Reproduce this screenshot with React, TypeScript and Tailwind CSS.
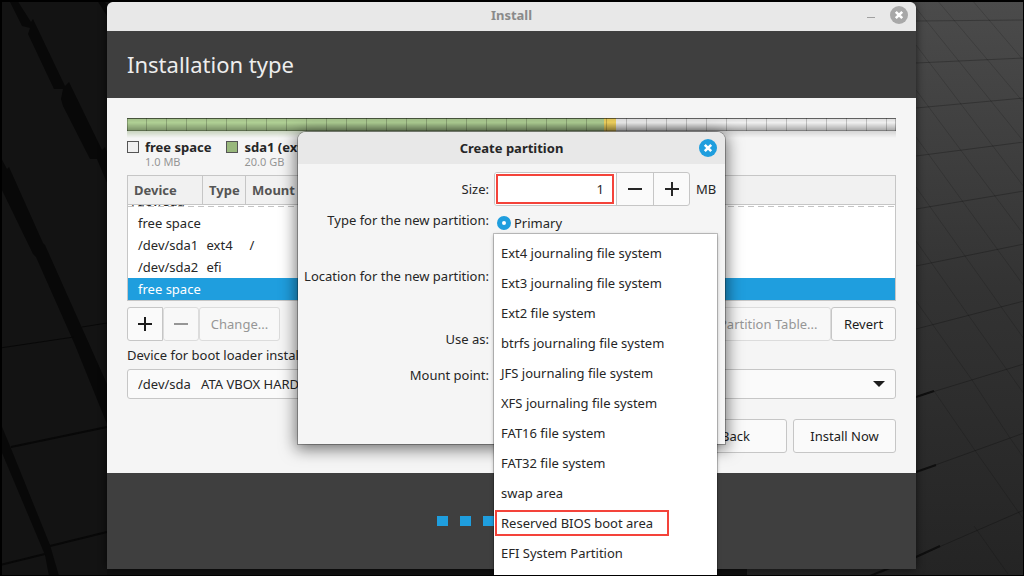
import { useState } from "react";
import type { ReactNode } from "react";

const fileSystems = [
  "Ext4 journaling file system",
  "Ext3 journaling file system",
  "Ext2 file system",
  "btrfs journaling file system",
  "JFS journaling file system",
  "XFS journaling file system",
  "FAT16 file system",
  "FAT32 file system",
  "swap area",
  "Reserved BIOS boot area",
  "EFI System Partition",
];

const partitions = [
  { device: "free space", type: "", mount: "" },
  { device: "/dev/sda1", type: "ext4", mount: "/" },
  { device: "/dev/sda2", type: "efi", mount: "" },
  { device: "free space", type: "", mount: "", selected: true },
];

function Wallpaper() {
  return (
    <svg
      className="absolute inset-0 h-full w-full"
      viewBox="0 0 1024 576"
      preserveAspectRatio="none"
      aria-hidden="true"
    >
      <defs>
        <linearGradient id="slate" x1="0" y1="0" x2="0" y2="1">
          <stop offset="0" stopColor="#4b4b4b" />
          <stop offset="0.5" stopColor="#333333" />
          <stop offset="1" stopColor="#242424" />
        </linearGradient>
      </defs>
      <rect width="512" height="576" fill="#131313" />
      <rect x="512" width="512" height="576" fill="url(#slate)" />
      <rect x="107" y="565" width="640" height="11" fill="#101010" />
      <g fill="#080808">
        <path d="M9 0H17L31 22 33 19 65 86 69 82 102 150 105 147 110 158V190L97 159H90L63 106 61 99 63 89H54L28 34 30 28 22 26Z" />
        <path d="M97 0H104L107 5V16Z" />
        <path d="M0 156 7 169 9 167 43 243 45 245 107 384V424L75 345 36 257 33 254 0 186Z" />
        <path d="M0 422 10 446 50 545 59 576H49L45 555 0 448Z" />
      </g>
      <g fill="none" stroke="#080808">
        <path d="M0 348 74 337M82 327 107 323" />
        <path strokeWidth="2" d="M11 447 107 427M50 546 107 532M0 565 45 554" />
      </g>
      <g fill="none" stroke="#000" strokeOpacity="0.15">
        <path
          strokeOpacity="0.24"
          d="M916 21 1024 20M916 63 1024 58M916 108 1024 98M916 156 1024 142M916 209 1024 191M916 266 1024 244M916 329 1024 301M916 397 1024 364M916 472 1024 433M880 573 916 557 1024 510"
        />
        <path d="M972 0 1024 61M937 0 1024 103M916 8 1024 142M916 45 1024 187M916 90 1024 235M916 137 1024 286M916 187 1024 339M916 241 1024 394M916 301 972 380 1010 438 1024 458M934 391 974 449 1024 520M974 526 1008 574" />
      </g>
      <g fill="none" stroke="#0f0f0f" strokeWidth="2">
        <path d="M916 397 934 391M916 472 936 465M870 576 916 557 940 546" />
      </g>
    </svg>
  );
}

function CloseIcon({ className }: { className: string }) {
  return (
    <svg className={className} width="18" height="18" viewBox="0 0 18 18" aria-hidden="true">
      <circle cx="9" cy="9" r="9" fill="currentColor" />
      <path d="M5.8 5.8 12.2 12.2M12.2 5.8 5.8 12.2" stroke="#fff" strokeWidth="2.6" />
    </svg>
  );
}

function Plus() {
  return (
    <svg width="14" height="14" viewBox="0 0 14 14" aria-hidden="true">
      <path d="M0 7H14M7 0V14" stroke="currentColor" strokeWidth="2" />
    </svg>
  );
}

function Minus() {
  return (
    <svg width="14" height="14" viewBox="0 0 14 14" aria-hidden="true">
      <path d="M0 7H14" stroke="currentColor" strokeWidth="2" />
    </svg>
  );
}

function Button({
  children,
  className = "",
  disabled,
  label,
}: {
  children: ReactNode;
  className?: string;
  disabled?: boolean;
  label?: string;
}) {
  return (
    <button
      type="button"
      disabled={disabled}
      aria-label={label}
      className={`flex h-[34px] items-center justify-center whitespace-nowrap rounded-[3px] border border-[#c6c6c6] bg-[#fafafa] text-[#1c1c1c] disabled:border-[#dcdcdc] disabled:bg-[#f8f8f8] disabled:text-[#969696] ${className}`}
    >
      {children}
    </button>
  );
}

function DiskBar() {
  return (
    <div>
      <div className="relative flex h-[13px] bg-[#f0f0f0]">
        <div className="w-[62%] bg-[#b0d095]" />
        <div className="w-3 bg-[#f5d660]" />
        <div className="absolute inset-0 bg-[repeating-linear-gradient(90deg,transparent_0px,transparent_20px,rgba(0,0,0,0.22)_20px,rgba(0,0,0,0.22)_21px)] bg-[length:20px_100%]" />
        <div className="absolute inset-0 bg-[repeating-linear-gradient(90deg,transparent_0px,transparent_19px,rgba(0,0,0,0.2)_19px,rgba(0,0,0,0.2)_20px)]" />
        <div className="absolute inset-0 border-x border-t border-black/25 bg-[linear-gradient(180deg,rgba(0,0,0,0.08)_0%,rgba(0,0,0,0)_30%,rgba(0,0,0,0.28)_90%,rgba(0,0,0,0.6)_100%)]" />
      </div>
      <div className="flex h-[7px] opacity-40 [mask-image:linear-gradient(180deg,black,transparent)]">
        <div className="w-[62%] bg-[#83a06c]" />
        <div className="w-3 bg-[#c0a23f]" />
        <div className="grow bg-[#a5a5a5]" />
      </div>
    </div>
  );
}

function LegendItem({ name, size, swatch }: { name: string; size: string; swatch: string }) {
  return (
    <li className="flex gap-1.5">
      <span className={`mt-[3px] h-3 w-3 border border-[#555] ${swatch}`} />
      <span className="flex flex-col whitespace-nowrap">
        <span className="font-bold leading-[18px]">{name}</span>
        <span className="text-[11px] leading-3 text-[#959595]">{size}</span>
      </span>
    </li>
  );
}

function PartitionTable() {
  return (
    <table className="mt-[7px] w-full table-fixed border-collapse border border-[#c6c6c6] bg-white">
      <thead>
        <tr className="h-[29px] bg-[#f1f1f1] text-left text-[#555]">
          <th className="w-[75px] border border-[#c6c6c6] pl-1.5 font-bold">Device</th>
          <th className="w-[43px] border border-[#c6c6c6] pl-1.5 font-bold">Type</th>
          <th className="whitespace-nowrap border border-[#c6c6c6] pl-1.5 font-bold">Mount point</th>
        </tr>
      </thead>
      <tbody>
        <tr>
          <td colSpan={3} className="p-0">
            <div className="relative flex h-[7px] items-end overflow-hidden pl-1">
              <span className="h-[22px] leading-[22px]">/dev/sda</span>
              <span className="absolute inset-x-0 top-px h-px bg-[repeating-linear-gradient(90deg,#c4c4c4_0px,#c4c4c4_6px,transparent_6px,transparent_10px)]" />
            </div>
          </td>
        </tr>
        {partitions.map((row, i) => (
          <tr
            key={i}
            className={row.selected ? "h-[22px] bg-[#1f9ede] text-white" : "h-[22px]"}
          >
            <td className="whitespace-nowrap p-0 pl-2.5">{row.device}</td>
            <td className="p-0 pl-1">{row.type}</td>
            <td className="p-0 pl-1">{row.mount}</td>
          </tr>
        ))}
      </tbody>
    </table>
  );
}

function CreatePartition() {
  const [size, setSize] = useState(1);
  const [kind, setKind] = useState("primary");
  const label = "whitespace-nowrap text-right";
  return (
    <section
      role="dialog"
      aria-labelledby="create-title"
      className="absolute inset-x-0 top-[130px] mx-auto min-h-[312px] w-[427px] rounded-t-lg bg-[#f5f5f5] shadow-[0_0_0_1px_rgba(0,0,0,0.28),0_3px_16px_2px_rgba(0,0,0,0.55)]"
    >
      <header className="grid h-8 grid-cols-[1fr_auto_1fr] items-center rounded-t-lg bg-[#e8e8e8] px-2">
        <h2 id="create-title" className="col-start-2 font-bold">
          Create partition
        </h2>
        <button type="button" aria-label="Close dialog" className="justify-self-end">
          <CloseIcon className="text-[#1f9ede]" />
        </button>
      </header>
      <form className="relative grid grid-cols-[191px_1fr] grid-rows-[34px_56px_56px_42px_30px] gap-x-[5px] pt-2">
        <label htmlFor="size" className={`${label} leading-[34px]`}>
          Size:
        </label>
        <div className="flex items-center gap-1.5">
          <div className="flex h-[34px] w-[196px] overflow-hidden rounded-[3px] border border-[#c6c6c6] bg-[#fafafa]">
            <div className="flex grow bg-white p-px">
              <input
                id="size"
                type="text"
                inputMode="numeric"
                value={size}
                onChange={(e) => setSize(Number(e.target.value) || 0)}
                className="w-[118px] border-2 border-[#f4433a] bg-white pr-2 text-right outline-none"
              />
            </div>
            <button
              type="button"
              aria-label="Decrease size"
              onClick={() => setSize(Math.max(0, size - 1))}
              className="flex w-[37px] items-center justify-center border-l border-[#c6c6c6]"
            >
              <Minus />
            </button>
            <button
              type="button"
              aria-label="Increase size"
              onClick={() => setSize(size + 1)}
              className="flex w-[36px] items-center justify-center border-l border-[#c6c6c6]"
            >
              <Plus />
            </button>
          </div>
          <span>MB</span>
        </div>

        <span className={`${label} leading-7`}>Type for the new partition:</span>
        <label className="flex h-[34px] items-center gap-[3px] pl-[3px]">
          <input
            type="radio"
            name="kind"
            checked={kind === "primary"}
            onChange={() => setKind("primary")}
            className="h-3.5 w-3.5 appearance-none rounded-full border-[5px] border-[#1f9ede] bg-white"
          />
          Primary
        </label>

        <span className={`${label} col-start-1 leading-7`}>Location for the new partition:</span>
        <span id="use-as" className={`${label} col-start-1 leading-[42px]`}>
          Use as:
        </span>
        <span className={`${label} col-start-1 leading-[30px]`}>Mount point:</span>

        <ul
          role="listbox"
          aria-labelledby="use-as"
          className="absolute left-[196px] top-[70px] w-[223px] bg-white pb-8 pl-px pt-1 shadow-[0_0_0_1px_rgba(0,0,0,0.2),0_1px_4px_rgba(0,0,0,0.3)]"
        >
          {fileSystems.map((name) => {
            const marked = name === "Reserved BIOS boot area";
            return (
              <li
                key={name}
                role="option"
                aria-selected={marked}
                className="flex h-[30px] items-center"
              >
                <span
                  className={`flex h-[26px] items-center whitespace-nowrap border-2 pl-1 pr-3.5 ${
                    marked ? "border-[#f4433a]" : "border-transparent"
                  }`}
                >
                  {name}
                </span>
              </li>
            );
          })}
        </ul>
      </form>
    </section>
  );
}

export default function App() {
  return (
    <div className="relative h-screen overflow-hidden bg-[#141414] font-['Noto_Sans','Open_Sans',sans-serif] text-[13px] leading-[18px] text-[#262626]">
      <Wallpaper />
      <main className="relative ml-[107px] mr-[108px] pt-0.5">
        <div className="relative rounded-t-lg bg-[#f5f5f5] shadow-[0_0_8px_rgba(0,0,0,0.6)]">
          <header className="grid h-[29px] grid-cols-[1fr_auto_1fr] items-center rounded-t-md bg-[#e8e8e8] px-2 pb-[3px]">
            <span className="col-start-2 font-bold text-[#8a8a8a]">Install</span>
            <div className="flex items-center gap-[15px] justify-self-end">
              <button type="button" aria-label="Minimize" className="flex h-3 w-2 items-end pb-[3px]">
                <span className="h-px w-2 bg-[#a0a0a0]" />
              </button>
              <button type="button" aria-label="Close window">
                <CloseIcon className="text-[#a8a8a8]" />
              </button>
            </div>
          </header>

          <div className="flex h-[67px] items-center bg-[#3f3f3f] px-5 pb-0.5">
            <h1 className="text-[22px] leading-7 text-[#ededed]">Installation type</h1>
          </div>

          <div className="flex flex-col p-5">
            <DiskBar />
            <ul className="flex gap-[15px]">
              <LegendItem name="free space" size="1.0 MB" swatch="bg-[#f0f0f0]" />
              <LegendItem name="sda1 (ext4)" size="20.0 GB" swatch="bg-[#99b87c]" />
            </ul>
            <PartitionTable />

            <div className="mt-1.5 flex">
              <Button className="w-9 rounded-r-none" label="Add">
                <Plus />
              </Button>
              <Button className="w-9" label="Remove" disabled>
                <Minus />
              </Button>
              <Button className="w-[81px]" disabled>
                Change...
              </Button>
              <Button className="ml-auto w-[156px]" disabled>
                New Partition Table...
              </Button>
              <Button className="w-[65px]">Revert</Button>
            </div>

            <label htmlFor="boot-device" className="mt-[5px]">
              Device for boot loader installation:
            </label>
            <div className="relative mt-[5px] flex">
              <select
                id="boot-device"
                className="h-[30px] w-full appearance-none rounded-[3px] border border-[#c6c6c6] bg-[#fafafa] px-2.5"
              >
                <option>{"/dev/sda\u00a0\u00a0\u00a0ATA VBOX HARDDISK"}</option>
              </select>
              <svg
                className="pointer-events-none absolute right-[11px] top-3"
                width="12"
                height="6"
                viewBox="0 0 12 6"
                aria-hidden="true"
              >
                <path d="M0 0H12L6 6Z" fill="#1c1c1c" />
              </svg>
            </div>

            <div className="mt-5 flex justify-end gap-1.5">
              <Button className="w-[103px]">Back</Button>
              <Button className="w-[103px]">Install Now</Button>
            </div>
          </div>

          <footer className="flex h-24 items-center justify-center gap-3 bg-[#3f3f3f]">
            {[0, 1, 2, 3, 4, 5, 6].map((step) => (
              <span key={step} className="h-2.5 w-[11px] bg-[#1f9ede]" />
            ))}
          </footer>

          <CreatePartition />
        </div>
      </main>
      <div className="pointer-events-none absolute inset-0 border-b border-l-2 border-r border-t-2 border-black" />
    </div>
  );
}
